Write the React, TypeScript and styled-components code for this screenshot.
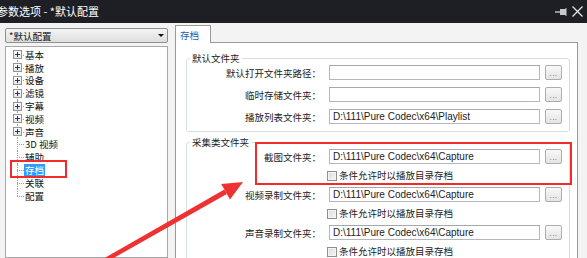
import styled, { createGlobalStyle } from 'styled-components'

const GlobalStyle = createGlobalStyle`
  html, body { margin: 0; padding: 0; }
  body {
    background: #f3f3f3;
    font-family: "Noto Sans CJK SC", "Noto Sans", sans-serif;
  }
`

const TREE = [
  { label: '基本', exp: true },
  { label: '播放', exp: true },
  { label: '设备', exp: true },
  { label: '滤镜', exp: true },
  { label: '字幕', exp: true },
  { label: '视频', exp: true },
  { label: '声音', exp: true },
  { label: '3D 视频' },
  { label: '辅助' },
  { label: '存档', selected: true },
  { label: '关联' },
  { label: '配置' },
]

const DEFAULT_FOLDERS = [
  { label: '默认打开文件夹路径：', value: '' },
  { label: '临时存储文件夹：', value: '' },
  { label: '播放列表文件夹：', value: 'D:\\111\\Pure Codec\\x64\\Playlist' },
]

const CAPTURE_FOLDERS = [
  { label: '截图文件夹：', value: 'D:\\111\\Pure Codec\\x64\\Capture' },
  { label: '视频录制文件夹：', value: 'D:\\111\\Pure Codec\\x64\\Capture' },
  { label: '声音录制文件夹：', value: 'D:\\111\\Pure Codec\\x64\\Capture' },
]

const Window = styled.div`
  position: relative;
  width: 587px;
  height: 258px;
  overflow: hidden;
  background: #f3f3f3;
  display: flex;
  flex-direction: column;
`

const TitleBar = styled.div`
  flex: none;
  height: 23px;
  background: #1e1f25;
  display: flex;
  align-items: center;
  justify-content: space-between;
  padding-right: 4px;
`

const Title = styled.span`
  margin-left: -3px;
  color: #ffffff;
  font-size: 11px;
  line-height: 1;
  white-space: pre;
`

const TitleButtons = styled.div`
  display: flex;
  align-items: center;
  gap: 5px;
`

const Body = styled.div`
  flex: 1;
  min-height: 0;
  display: flex;
`

const LeftPane = styled.div`
  width: 163px;
  margin-left: 5px;
  padding-top: 5px;
  display: flex;
  flex-direction: column;
  gap: 3px;
`

const Combo = styled.div`
  flex: none;
  height: 15px;
  box-sizing: border-box;
  border: 1px solid #8f8f8f;
  border-radius: 2px;
  background: linear-gradient(#f4f4f4, #dedede);
  display: flex;
  align-items: center;
  justify-content: space-between;
  padding: 0 3px 0 3px;
  font-size: 9.5px;
  line-height: 12px;
  color: #111;
`

const ComboArrow = styled.span`
  width: 0;
  height: 0;
  border-left: 3px solid transparent;
  border-right: 3px solid transparent;
  border-top: 3px solid #111;
`

const Tree = styled.div`
  flex: 1;
  border: 1px solid #a8a8a8;
  background: #ffffff;
  padding-top: 1.5px;
`

const TreeRow = styled.div`
  height: 12.8px;
  display: flex;
  align-items: center;
  font-size: 9.5px;
  line-height: 12px;
  color: #111;
`

const Connector = styled.span<{ $first?: boolean; $last?: boolean }>`
  position: relative;
  flex: none;
  width: 18px;
  height: 100%;
  box-sizing: border-box;
  padding-left: 7px;
  display: flex;
  align-items: center;

  &::before {
    content: '';
    position: absolute;
    left: 11px;
    top: ${(p) => (p.$first ? '50%' : '0')};
    bottom: ${(p) => (p.$last ? '50%' : '0')};
    border-left: 1px dotted #9a9a9a;
  }
  &::after {
    content: '';
    position: absolute;
    left: 11px;
    right: 0;
    top: 50%;
    border-top: 1px dotted #9a9a9a;
  }
`

const Expander = styled.span`
  position: relative;
  z-index: 1;
  width: 9px;
  height: 9px;
  box-sizing: border-box;
  border: 1px solid #949494;
  background: linear-gradient(#ffffff, #e6e6e6);

  &::before {
    content: '';
    position: absolute;
    left: 1px;
    top: 3px;
    width: 5px;
    height: 1px;
    background: #22386a;
  }
  &::after {
    content: '';
    position: absolute;
    left: 3px;
    top: 1px;
    width: 1px;
    height: 5px;
    background: #22386a;
  }
`

const TreeLabel = styled.span<{ $selected?: boolean }>`
  padding: 0 1px;
  white-space: pre;
  background: ${(p) => (p.$selected ? '#3399ff' : 'transparent')};
  color: ${(p) => (p.$selected ? '#ffffff' : '#111')};
`

const RightPane = styled.div`
  width: 403px;
  margin-left: 7px;
  padding-top: 2px;
  display: flex;
  flex-direction: column;
`

const TabStrip = styled.div`
  flex: none;
  display: flex;
  position: relative;
  z-index: 1;
  margin-bottom: -1px;
`

const Tab = styled.div`
  width: 36px;
  height: 18px;
  box-sizing: border-box;
  border: 1px solid #9a9a9a;
  border-bottom: none;
  background: #ffffff;
  padding: 3px 0 0 4px;
  font-size: 9.5px;
  line-height: 12px;
  color: #2b5aa8;
`

const TabPanel = styled.div`
  flex: 1;
  min-height: 0;
  overflow: hidden;
  border: 1px solid #9a9a9a;
  border-bottom: none;
  background: #ffffff;
  padding: 0 7px 0 10px;
`

const GroupBox = styled.fieldset<{ $gap: number; $top: number }>`
  margin: ${(p) => p.$gap}px 0 0;
  border: 1px solid #d5dfe5;
  border-radius: 3px;
  padding: ${(p) => p.$top}px 12px 7px 0;
  min-width: 0;
  display: flex;
  flex-direction: column;
  gap: 7px;
`

const GroupLegend = styled.legend`
  margin-left: 3px;
  padding: 0 2px;
  font-size: 9.5px;
  line-height: 12px;
  color: #222;
`

const FieldBlock = styled.div`
  display: flex;
  flex-direction: column;
  gap: 6px;
  margin-bottom: -1px;
`

const FieldRow = styled.div`
  display: grid;
  grid-template-columns: 137px 211px 17px;
  column-gap: 5px;
  align-items: center;
  height: 15px;
`

const FieldLabel = styled.span`
  padding-right: 3px;
  text-align: right;
  white-space: pre;
  font-size: 9.5px;
  line-height: 12px;
  color: #222;
`

const PathInput = styled.div`
  height: 15px;
  box-sizing: border-box;
  border: 1px solid #b4b7bd;
  border-top-color: #a5a8ae;
  background: #ffffff;
  padding-left: 3px;
  font-family: "Liberation Sans", Arial, sans-serif;
  font-size: 10px;
  line-height: 13px;
  color: #222;
  white-space: pre;
  overflow: hidden;
`

const BrowseButton = styled.div`
  height: 15px;
  box-sizing: border-box;
  border: 1px solid #adadad;
  border-radius: 2px;
  background: linear-gradient(#f8f8f8, #e4e4e4);
  display: flex;
  justify-content: center;
  align-items: flex-end;
  font-family: "Liberation Sans", Arial, sans-serif;
  font-size: 8px;
  line-height: 10px;
  color: #666;
  letter-spacing: 0.5px;
`

const CheckRow = styled.div`
  display: flex;
  align-items: center;
  gap: 2px;
  height: 11px;
  margin-left: 140px;
  font-size: 9.5px;
  line-height: 11px;
  color: #222;
  white-space: pre;
`

const CheckBox = styled.span`
  flex: none;
  width: 10px;
  height: 10px;
  box-sizing: border-box;
  border: 1px solid #8e8f8f;
  background: linear-gradient(135deg, #dcdcdc, #f6f6f6);
  box-shadow: inset 0 0 0 1px #f4f4f4;
`

const RedBox = styled.div<{ $x: number; $y: number; $w: number; $h: number }>`
  position: absolute;
  left: ${(p) => p.$x}px;
  top: ${(p) => p.$y}px;
  width: ${(p) => p.$w}px;
  height: ${(p) => p.$h}px;
  box-sizing: border-box;
  border: 2px solid #f02b2b;
  pointer-events: none;
`

const ArrowLayer = styled.svg`
  position: absolute;
  left: 0;
  top: 0;
  pointer-events: none;
`

function PinIcon() {
  return (
    <svg width="12" height="8" viewBox="0 0 12 8">
      <path d="M0 4H5" stroke="#c8c8c8" strokeWidth="1.4" />
      <rect x="5" y="1" width="6" height="6" fill="#c8c8c8" />
      <path d="M11 0V8" stroke="#c8c8c8" strokeWidth="1" />
    </svg>
  )
}

function CloseIcon() {
  return (
    <svg width="11" height="11" viewBox="0 0 11 11">
      <path d="M0.5 0.5L10.5 10.5M10.5 0.5L0.5 10.5" stroke="#e4e4e4" strokeWidth="1.3" />
    </svg>
  )
}

export default function App() {
  return (
    <Window>
      <GlobalStyle />
      <TitleBar>
        <Title>参数选项 - *默认配置</Title>
        <TitleButtons>
          <PinIcon />
          <CloseIcon />
        </TitleButtons>
      </TitleBar>

      <Body>
        <LeftPane>
          <Combo>
            <span>*默认配置</span>
            <ComboArrow />
          </Combo>
          <Tree>
            {TREE.map((item, i) => (
              <TreeRow key={item.label}>
                <Connector $first={i === 0} $last={i === TREE.length - 1}>
                  {item.exp && <Expander />}
                </Connector>
                <TreeLabel $selected={item.selected}>{item.label}</TreeLabel>
              </TreeRow>
            ))}
          </Tree>
        </LeftPane>

        <RightPane>
          <TabStrip>
            <Tab>存档</Tab>
          </TabStrip>
          <TabPanel>
            <GroupBox $gap={9} $top={1}>
              <GroupLegend>默认文件夹</GroupLegend>
              {DEFAULT_FOLDERS.map((f) => (
                <FieldRow key={f.label}>
                  <FieldLabel>{f.label}</FieldLabel>
                  <PathInput>{f.value}</PathInput>
                  <BrowseButton>...</BrowseButton>
                </FieldRow>
              ))}
            </GroupBox>

            <GroupBox $gap={4} $top={1}>
              <GroupLegend>采集类文件夹</GroupLegend>
              {CAPTURE_FOLDERS.map((f) => (
                <FieldBlock key={f.label}>
                  <FieldRow>
                    <FieldLabel>{f.label}</FieldLabel>
                    <PathInput>{f.value}</PathInput>
                    <BrowseButton>...</BrowseButton>
                  </FieldRow>
                  <CheckRow>
                    <CheckBox />
                    条件允许时以播放目录存档
                  </CheckRow>
                </FieldBlock>
              ))}
            </GroupBox>
          </TabPanel>
        </RightPane>
      </Body>

      <RedBox $x={10} $y={160} $w={57} $h={18} />
      <RedBox $x={255} $y={142} $w={317} $h={43} />

      <ArrowLayer width="587" height="258" viewBox="0 0 587 258">
        <polygon
          points="96.1,267.9 93.9,264.1 224.4,189.6 226.8,194.0"
          fill="#ee3232"
        />
        <polygon points="243,182 230,199.6 221.2,184" fill="#ee3232" />
      </ArrowLayer>
    </Window>
  )
}
